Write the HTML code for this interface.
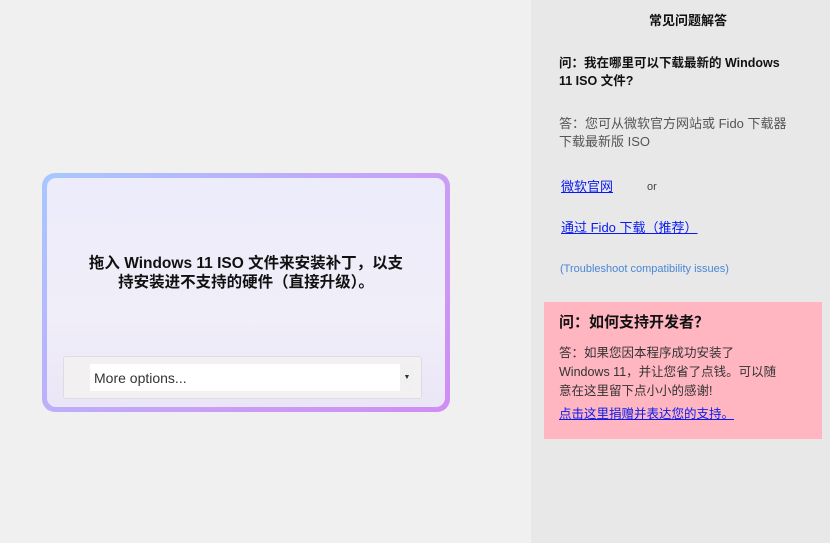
<!DOCTYPE html>
<html><head><meta charset="utf-8"><style>
*{margin:0;padding:0;box-sizing:border-box}
body{width:830px;height:543px;background:#f0f0f0;position:relative;overflow:hidden;font-family:"Liberation Sans","Noto Sans CJK SC",sans-serif}
.card{position:absolute;left:42px;top:173px;width:408px;height:239px;border-radius:13px;background:linear-gradient(135deg,#a8c8ff,#c9a0f5 60%,#d08cf5);padding:5px}
.inner{width:100%;height:100%;border-radius:9px;background:linear-gradient(180deg,#ececfa,#f0eef8 60%,#ebe6f7);position:relative}
.msg{position:absolute;left:0;right:0;top:76px;text-align:center;font-weight:bold;font-size:15.5px;line-height:19px;color:#111}
.dd{position:absolute;left:16px;top:178px;width:359px;height:43px;background:#f3f0f1;border:1px solid #ddd;border-radius:3px}
.sel{position:absolute;left:26px;top:7px;width:324px;height:27px;background:#fff;font-size:14px;color:#333;padding:6px 4px;line-height:16px}
.arr{position:absolute;right:0;top:0;width:14px;height:27px;background:#f0f0f0;font-size:7px;text-align:center;line-height:27px}
.side{position:absolute;left:531px;top:0;width:299px;height:543px;background:#e8e8e8}
.t{position:absolute;font-size:13px;color:#111;line-height:18px}
a{color:#0a1aee;text-decoration:underline}
.pink{position:absolute;left:13px;top:302px;width:278px;height:137px;background:#ffb6c1}
</style></head><body>
<div class="card"><div class="inner">
<div class="msg">拖入 Windows 11 ISO 文件来安装补丁，以支<br>持安装进不支持的硬件（直接升级）。</div>
<div class="dd"><div class="sel">More options...<div class="arr">▼</div></div></div>
</div></div>
<div class="side">
<div class="t" style="left:0;width:314px;text-align:center;top:12px;font-weight:bold">常见问题解答</div>
<div class="t" style="left:28px;top:54px;width:260px;font-weight:bold;font-size:12.5px">问：我在哪里可以下载最新的 Windows<br>11 ISO 文件?</div>
<div class="t" style="left:28px;top:115px;width:260px;color:#555">答：您可从微软官方网站或 Fido 下载器<br>下载最新版 ISO</div>
<div class="t" style="left:30px;top:178px"><a>微软官网</a></div>
<div class="t" style="left:116px;top:178px;font-size:11px;color:#444">or</div>
<div class="t" style="left:30px;top:219px"><a>通过 Fido 下载（推荐）</a></div>
<div class="t" style="left:29px;top:260px;font-size:11px;color:#4a86d6">(Troubleshoot compatibility issues)</div>
<div class="pink">
<div class="t" style="left:15px;top:11px;font-size:15px;font-weight:bold;line-height:20px">问：如何支持开发者？</div>
<div class="t" style="left:15px;top:42px;width:250px;color:#333;font-size:12.5px;line-height:19px">答：如果您因本程序成功安装了<br>Windows 11，并让您省了点钱。可以随<br>意在这里留下点小小的感谢!</div>
<div class="t" style="left:15px;top:103px;font-size:12.5px"><a>点击这里捐赠并表达您的支持。</a></div>
</div>
</div>
</body></html>
